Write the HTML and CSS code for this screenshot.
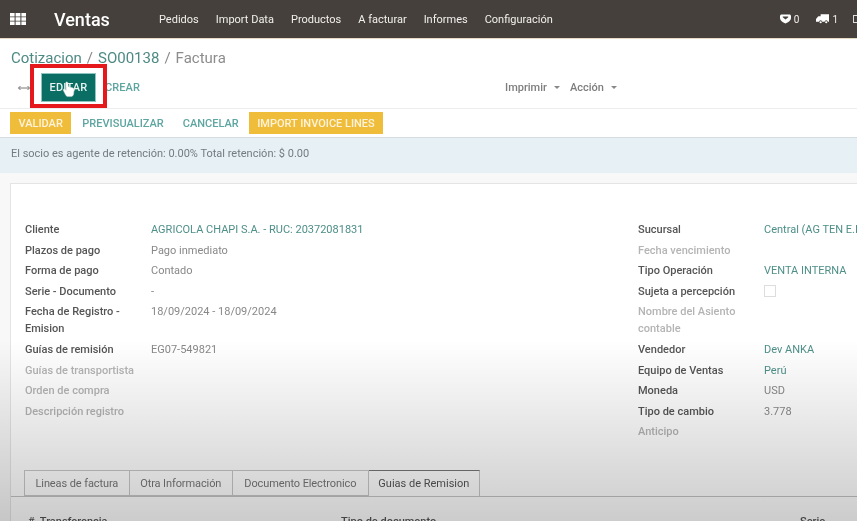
FILE: index.html
```html
<!DOCTYPE html>
<html lang="es">
<head>
    <meta charset="UTF-8">
    <title>Factura</title>
    <link rel="stylesheet" href="styles.css">
</head>
<body>
    <header class="navbar">
        <svg class="apps" width="16" height="12" viewBox="0 0 16 12">
            <path fill="#fff" d="M0 0h4.6v3.4H0zM5.6 0h4.8v3.4H5.6zM11.4 0H16v3.4h-4.6zM0 4.3h4.6v3.4H0zM5.6 4.3h4.8v3.4H5.6zM11.4 4.3H16v3.4h-4.6zM0 8.6h4.6V12H0zM5.6 8.6h4.8V12H5.6zM11.4 8.6H16V12h-4.6z"/>
        </svg>
        <span class="brand">Ventas</span>
        <nav class="menu">
            <a>Pedidos</a>
            <a>Import Data</a>
            <a>Productos</a>
            <a>A facturar</a>
            <a>Informes</a>
            <a>Configuración</a>
        </nav>
        <div class="systray">
            <span class="tray-item">
                <svg width="11" height="10" viewBox="0 0 12 10"><path fill="#fff" d="M1 0h10l1 1.500V4c0 2.500-3 5-6 6-3-1-6-3.500-6-6V1.500zM3 3l3 2.500L9 3v-.8H3z" fill-rule="evenodd"/></svg>
                0
            </span>
            <span class="tray-item">
                <svg width="13" height="10" viewBox="0 0 14 10"><path fill="#fff" d="M5 0h9v8h-1.300a1.700 1.700 0 0 0-3.400 0H6.700a1.700 1.700 0 0 0-3.400 0H0V5l2.500-3H5z"/><circle fill="#fff" cx="5" cy="8.500" r="1.200"/><circle fill="#fff" cx="11" cy="8.500" r="1.200"/></svg>
                1
            </span>
            <span class="tray-user"></span>
        </div>
    </header>

    <section class="control-panel">
        <div class="breadcrumb">
            <a>Cotizacion</a><span class="sep">/</span><a>SO00138</a><span class="sep">/</span><span class="current">Factura</span>
        </div>
        <div class="actions">
            <svg class="resize" width="12" height="6" viewBox="0 0 12 6">
                <path fill="none" stroke="#777" stroke-width="1" d="M.5 3h11M2.500 1 .5 3l2 2M9.500 1l2 2-2 2"/>
            </svg>
            <button class="btn-edit">EDITAR</button>
            <button class="btn-link">CREAR</button>
            <div class="dropdowns">
                <span class="dropdown">Imprimir</span>
                <span class="dropdown">Acción</span>
            </div>
        </div>
        <div class="highlight"></div>
        <svg class="hand" width="14" height="17" viewBox="0 0 18 22">
            <path fill="#fff" stroke="#cfd8d6" stroke-width=".6" d="M5 1.500c1-.8 2.300-.2 2.500 1l.8 5 5 1.200c1.500.4 2.300 1.500 2.200 3l-.5 5c-.2 2-1.800 3.500-4 3.500H8c-1.500 0-2.500-.7-3.300-2L1.500 12c-.5-1 .6-2.300 1.800-1.500l2 1.500z"/>
        </svg>
    </section>

    <div class="statusbar">
        <button class="btn-yellow">VALIDAR</button>
        <button class="btn-link">PREVISUALIZAR</button>
        <button class="btn-link">CANCELAR</button>
        <button class="btn-yellow">IMPORT INVOICE LINES</button>
    </div>

    <div class="alert">El socio es agente de retención: 0.00% Total retención: $ 0.00</div>

    <main class="sheet-wrap">
        <div class="sheet">
            <div class="groups">
                <dl class="group group-left">
                    <dt>Cliente</dt><dd class="link">AGRICOLA CHAPI S.A. - RUC: 20372081831</dd>
                    <dt>Plazos de pago</dt><dd>Pago inmediato</dd>
                    <dt>Forma de pago</dt><dd>Contado</dd>
                    <dt>Serie - Documento</dt><dd>-</dd>
                    <dt>Fecha de Registro - Emision</dt><dd>18/09/2024 - 18/09/2024</dd>
                    <dt>Guías de remisión</dt><dd>EG07-549821</dd>
                    <dt class="empty">Guías de transportista</dt><dd></dd>
                    <dt class="empty">Orden de compra</dt><dd></dd>
                    <dt class="empty">Descripción registro</dt><dd></dd>
                </dl>
                <dl class="group group-right">
                    <dt>Sucursal</dt><dd class="link nowrap">Central (AG TEN E.I.R.L.)</dd>
                    <dt class="empty">Fecha vencimiento</dt><dd></dd>
                    <dt>Tipo Operación</dt><dd class="link">VENTA INTERNA</dd>
                    <dt>Sujeta a percepción</dt><dd><span class="checkbox"></span></dd>
                    <dt class="empty">Nombre del Asiento contable</dt><dd></dd>
                    <dt>Vendedor</dt><dd class="link">Dev ANKA</dd>
                    <dt>Equipo de Ventas</dt><dd class="link">Perú</dd>
                    <dt>Moneda</dt><dd>USD</dd>
                    <dt>Tipo de cambio</dt><dd>3.778</dd>
                    <dt class="empty">Anticipo</dt><dd></dd>
                </dl>
            </div>
            <ul class="tabs">
                <li>Lineas de factura</li>
                <li>Otra Información</li>
                <li class="wide">Documento Electronico</li>
                <li class="active">Guias de Remision</li>
            </ul>
            <div class="table-head">
                <span class="col-a">#&nbsp; Transferencia</span>
                <span class="col-b">Tipo de documento</span>
                <span class="col-c">Serie</span>
            </div>
        </div>
    </main>

    <div class="fade"></div>
</body>
</html>
```

FILE: styles.css
```css
* {
    margin: 0;
    padding: 0;
    box-sizing: border-box;
}

body {
    width: 857px;
    height: 521px;
    overflow: hidden;
    position: relative;
    background: #fff;
    font-family: Roboto, "Liberation Sans", sans-serif;
    font-size: 11px;
    color: #666;
    /* the reference is a video frame, everything is a little soft */
    filter: blur(0.35px);
}

button {
    border: none;
    background: none;
    font-family: inherit;
    font-weight: 500;
    font-size: 11px;
}

/* top bar */
.navbar {
    height: 39px;
    display: flex;
    align-items: center;
    background: #45403b;
    border-bottom: 1px solid #e6dcc4;
    color: #f2f0ee;
    padding-left: 10px;
}

.apps {
    flex: none;
}

.brand {
    font-size: 18px;
    font-weight: 500;
    color: #fff;
    margin-left: 28px;
    width: 105px;
}

.menu {
    display: flex;
    gap: 17px;
    font-size: 11px;
}

.systray {
    margin-left: auto;
    display: flex;
    align-items: center;
    font-size: 10px;
}

.tray-item {
    display: flex;
    align-items: center;
    gap: 3px;
    margin-right: 17px;
}

.tray-item:nth-child(2) {
    margin-right: 15px;
}

.tray-user {
    width: 4px;
    height: 8px;
    border: 1px solid #ddd;
    border-right: none;
}

/* breadcrumb + buttons */
.control-panel {
    position: relative;
    height: 70px;
    padding: 10px 11px 0;
    border-bottom: 1px solid #eee;
}

.breadcrumb {
    font-size: 15px;
    line-height: 19px;
    color: #4e8a84;
}

.breadcrumb .sep {
    color: #888;
    margin: 0 5px;
}

.breadcrumb .current {
    color: #8c8c8c;
}

.actions {
    display: flex;
    align-items: center;
    margin-top: 5px;
    height: 29px;
}

.resize {
    flex: none;
    margin: 0 11px 0 7px;
}

.btn-edit {
    width: 55px;
    height: 29px;
    background: #0b6e64;
    border: 1px solid #8ec5bf;
    color: #e8f2f1;
    letter-spacing: 0.2px;
}

.btn-link {
    color: #5da5a0;
    padding: 0 9px;
    letter-spacing: 0.1px;
}

.dropdowns {
    margin-left: 356px;
    display: flex;
    gap: 10px;
    color: #7d7d7d;
    font-weight: 500;
}

.dropdown::after {
    content: "";
    display: inline-block;
    margin-left: 7px;
    vertical-align: 2px;
    border-top: 3px solid #888;
    border-left: 3px solid transparent;
    border-right: 3px solid transparent;
}

.highlight {
    position: absolute;
    left: 30px;
    top: 25px;
    width: 77px;
    height: 44px;
    border: 4px solid #e5191c;
}

.hand {
    position: absolute;
    left: 62px;
    top: 42px;
}

/* status bar */
.statusbar {
    height: 29px;
    display: flex;
    align-items: flex-start;
    padding: 3px 0 0 10px;
    border-bottom: 1px solid #d5dde2;
}

.statusbar .btn-link {
    height: 22px;
    padding: 0 8px 0 11px;
    letter-spacing: 0;
}

.btn-yellow {
    height: 22px;
    padding: 0 8.500px;
    background: #f0bd3a;
    color: #fdf3dc;
}

.btn-link + .btn-yellow {
    margin-left: 2px;
}

.alert {
    height: 35px;
    padding: 9px 11px 0;
    background: #e6f0f5;
    color: #737b80;
    font-size: 11px;
}

/* form sheet */
.sheet-wrap {
    background: #f8f8f8;
    padding: 10px 0 0 10px;
}

.sheet {
    position: relative;
    background: #fff;
    border: 1px solid #e4e4e4;
    border-right: none;
    height: 340px;
    overflow: hidden;
    padding: 37px 0 0 14px;
}

.groups {
    display: flex;
    height: 249px;
}

.group {
    flex: none;
    display: grid;
    grid-auto-rows: min-content;
    line-height: 17px;
    row-gap: 3.600px;
}

.group-left {
    width: 613px;
    grid-template-columns: 126px 1fr;
}

.group-right {
    grid-template-columns: 126px 120px;
}

dt {
    font-weight: 500;
    color: #555;
    padding-right: 12px;
}

dt.empty {
    color: #b4b4b4;
}

dd {
    color: #888;
}

dd.link {
    color: #4e8f88;
}

dd.nowrap {
    white-space: nowrap;
}

.checkbox {
    display: block;
    width: 12px;
    height: 12px;
    margin-top: 2px;
    border: 1px solid #ddd;
}

/* tabs */
.tabs {
    list-style: none;
    display: flex;
    height: 27px;
    margin-left: -14px;
    padding-left: 13px;
    border-bottom: 1px solid #c4c4c4;
}

.tabs li {
    height: 26px;
    line-height: 25px;
    padding: 0 10.500px;
    border: 1px solid #c8c8c8;
    border-left: none;
    color: #777;
    letter-spacing: -0.1px;
}

.tabs li:first-child {
    border-left: 1px solid #c8c8c8;
}

.tabs .wide {
    padding: 0 11.500px;
}

.tabs .active {
    height: 27px;
    padding: 0 9.500px;
    background: #fff;
    color: #555;
    border-top-color: #777;
    letter-spacing: 0;
}

.table-head {
    display: flex;
    padding-top: 18px;
    font-weight: 500;
    color: #555;
}

.col-a {
    width: 316px;
    padding-left: 3px;
}

.col-b {
    width: 459px;
}

/* the video fades to grey towards the bottom */
.fade {
    position: absolute;
    left: 0;
    right: 0;
    top: 340px;
    bottom: 0;
    background: linear-gradient(rgba(0, 0, 0, 0), rgba(0, 0, 0, 0.2));
    pointer-events: none;
}
```
